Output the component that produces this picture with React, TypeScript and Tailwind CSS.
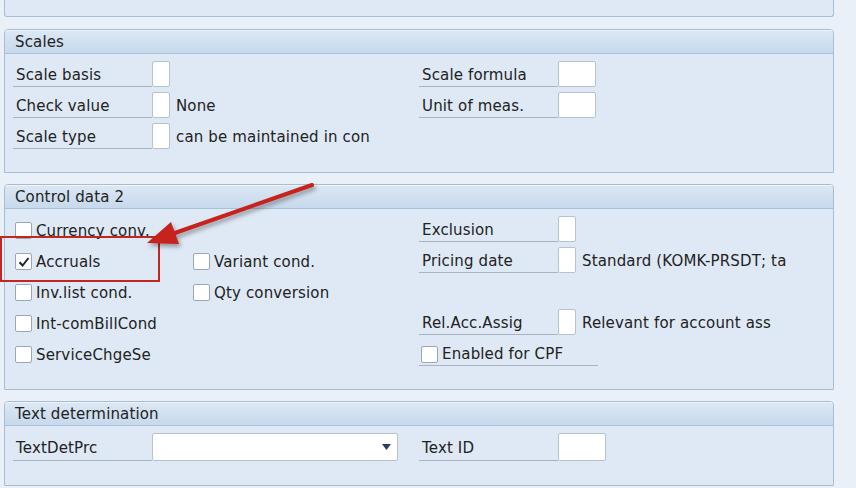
import type { ReactNode } from "react";

const font =
  "font-['DejaVu_Sans',sans-serif] text-[15px] tracking-[0.15px] text-[#222]";

function Panel({
  title,
  height,
  children,
}: {
  title: string;
  height: string;
  children: ReactNode;
}) {
  return (
    <div
      className={`${height} w-[830px] overflow-hidden rounded-t-[4px] border border-[#a6bdd5] bg-[#dfe9f5]`}
    >
      <div className="flex h-[24px] items-center border-b border-[#a9c2db] bg-gradient-to-b from-[#dce8f4] to-[#c7d9ec] pt-[2px] pl-[10px] shadow-[inset_0_1px_0_#eef4fa]">
        {title}
      </div>
      {children}
    </div>
  );
}

function Field({
  label,
  box,
  text,
}: {
  label: string;
  box: string;
  text?: string;
}) {
  return (
    <div className="flex h-[26px] items-stretch">
      <div className="flex w-[139px] items-center border-b border-[#a9b3be] pt-[3px] pl-[3px]">
        {label}
      </div>
      <div
        className={`${box} rounded-[2px] border border-[#b7c2ce] bg-white`}
      />
      {text && (
        <span className="ml-[6px] self-center whitespace-nowrap pt-[3px]">
          {text}
        </span>
      )}
    </div>
  );
}

function Check({
  label,
  checked,
  line,
}: {
  label: string;
  checked?: boolean;
  line?: boolean;
}) {
  return (
    <div
      className={`flex h-[26px] items-center pt-[3px] ${
        line ? "w-[179px] border-b border-[#a9b3be]" : ""
      }`}
    >
      <div className="ml-[2px] flex h-[17px] w-[17px] items-center justify-center rounded-[2px] border border-[#9ba7b4] bg-white">
        {checked && (
          <svg width="12" height="12" viewBox="0 0 12 12">
            <path
              d="M1.5 6.2 L4.6 9.5 L10.5 2"
              fill="none"
              stroke="#1c2430"
              strokeWidth="2"
            />
          </svg>
        )}
      </div>
      <span className="ml-[4px] whitespace-nowrap pt-[1px]">{label}</span>
    </div>
  );
}

export default function App() {
  return (
    <div
      className={`relative h-[488px] w-[856px] overflow-hidden bg-[#eaf0f7] pl-[4px] ${font}`}
    >
      <div className="h-[17px] w-[830px] rounded-b-[3px] border-x border-b border-[#a6bdd5] bg-[#dfe9f5]" />

      <div className="mt-[12px]">
        <Panel title="Scales" height="h-[144px]">
          <div className="grid grid-cols-[406px_1fr] gap-y-[5px] pt-[7px] pl-[8px]">
            <Field label="Scale basis" box="w-[18px]" />
            <Field label="Scale formula" box="w-[38px]" />
            <Field label="Check value" box="w-[18px]" text="None" />
            <Field label="Unit of meas." box="w-[38px]" />
            <Field
              label="Scale type"
              box="w-[18px]"
              text="can be maintained in con"
            />
            <div />
          </div>
        </Panel>
      </div>

      <div className="mt-[11px]">
        <Panel title="Control data 2" height="h-[206px]">
          <div className="grid grid-cols-[178px_228px_1fr] gap-y-[5px] pt-[7px] pl-[8px]">
            <Check label="Currency conv." />
            <div />
            <Field label="Exclusion" box="w-[18px]" />

            <Check label="Accruals" checked />
            <Check label="Variant cond." />
            <Field
              label="Pricing date"
              box="w-[18px]"
              text="Standard (KOMK-PRSDT; ta"
            />

            <Check label="Inv.list cond." />
            <Check label="Qty conversion" />
            <div className="h-[26px]" />

            <Check label="Int-comBillCond" />
            <div />
            <Field
              label="Rel.Acc.Assig"
              box="w-[18px]"
              text="Relevant for account ass"
            />

            <Check label="ServiceChgeSe" />
            <div />
            <Check label="Enabled for CPF" line />
          </div>
        </Panel>
      </div>

      <div className="mt-[11px]">
        <Panel title="Text determination" height="h-[85px]">
          <div className="grid grid-cols-[406px_1fr] pt-[7px] pl-[8px]">
            <div className="flex h-[28px] items-stretch">
              <div className="flex w-[139px] items-center border-b border-[#a9b3be] pt-[3px] pl-[3px]">
                TextDetPrc
              </div>
              <div className="flex w-[246px] items-center justify-end rounded-[2px] border border-[#b7c2ce] bg-white pr-[6px]">
                <svg width="9" height="6" viewBox="0 0 9 6">
                  <path d="M0 0 H9 L4.5 6 Z" fill="#2c3e5c" />
                </svg>
              </div>
            </div>
            <div className="flex h-[28px] items-stretch">
              <div className="flex w-[139px] items-center border-b border-[#a9b3be] pt-[3px] pl-[3px]">
                Text ID
              </div>
              <div className="w-[48px] rounded-[2px] border border-[#b7c2ce] bg-white" />
            </div>
          </div>
        </Panel>
      </div>

      <div className="absolute left-0 top-[236px] h-[46px] w-[160px] border-[2.5px] border-[#c3261f]" />

      <svg
        className="pointer-events-none absolute left-0 top-0 drop-shadow-[2px_3px_2px_rgba(0,0,0,0.35)]"
        width="856"
        height="488"
        viewBox="0 0 856 488"
      >
        <line
          x1="312"
          y1="185"
          x2="172"
          y2="234"
          stroke="#c8221c"
          strokeWidth="4"
          strokeLinecap="round"
        />
        <polygon points="147,243 171,222 179,244" fill="#c8221c" />
      </svg>
    </div>
  );
}
